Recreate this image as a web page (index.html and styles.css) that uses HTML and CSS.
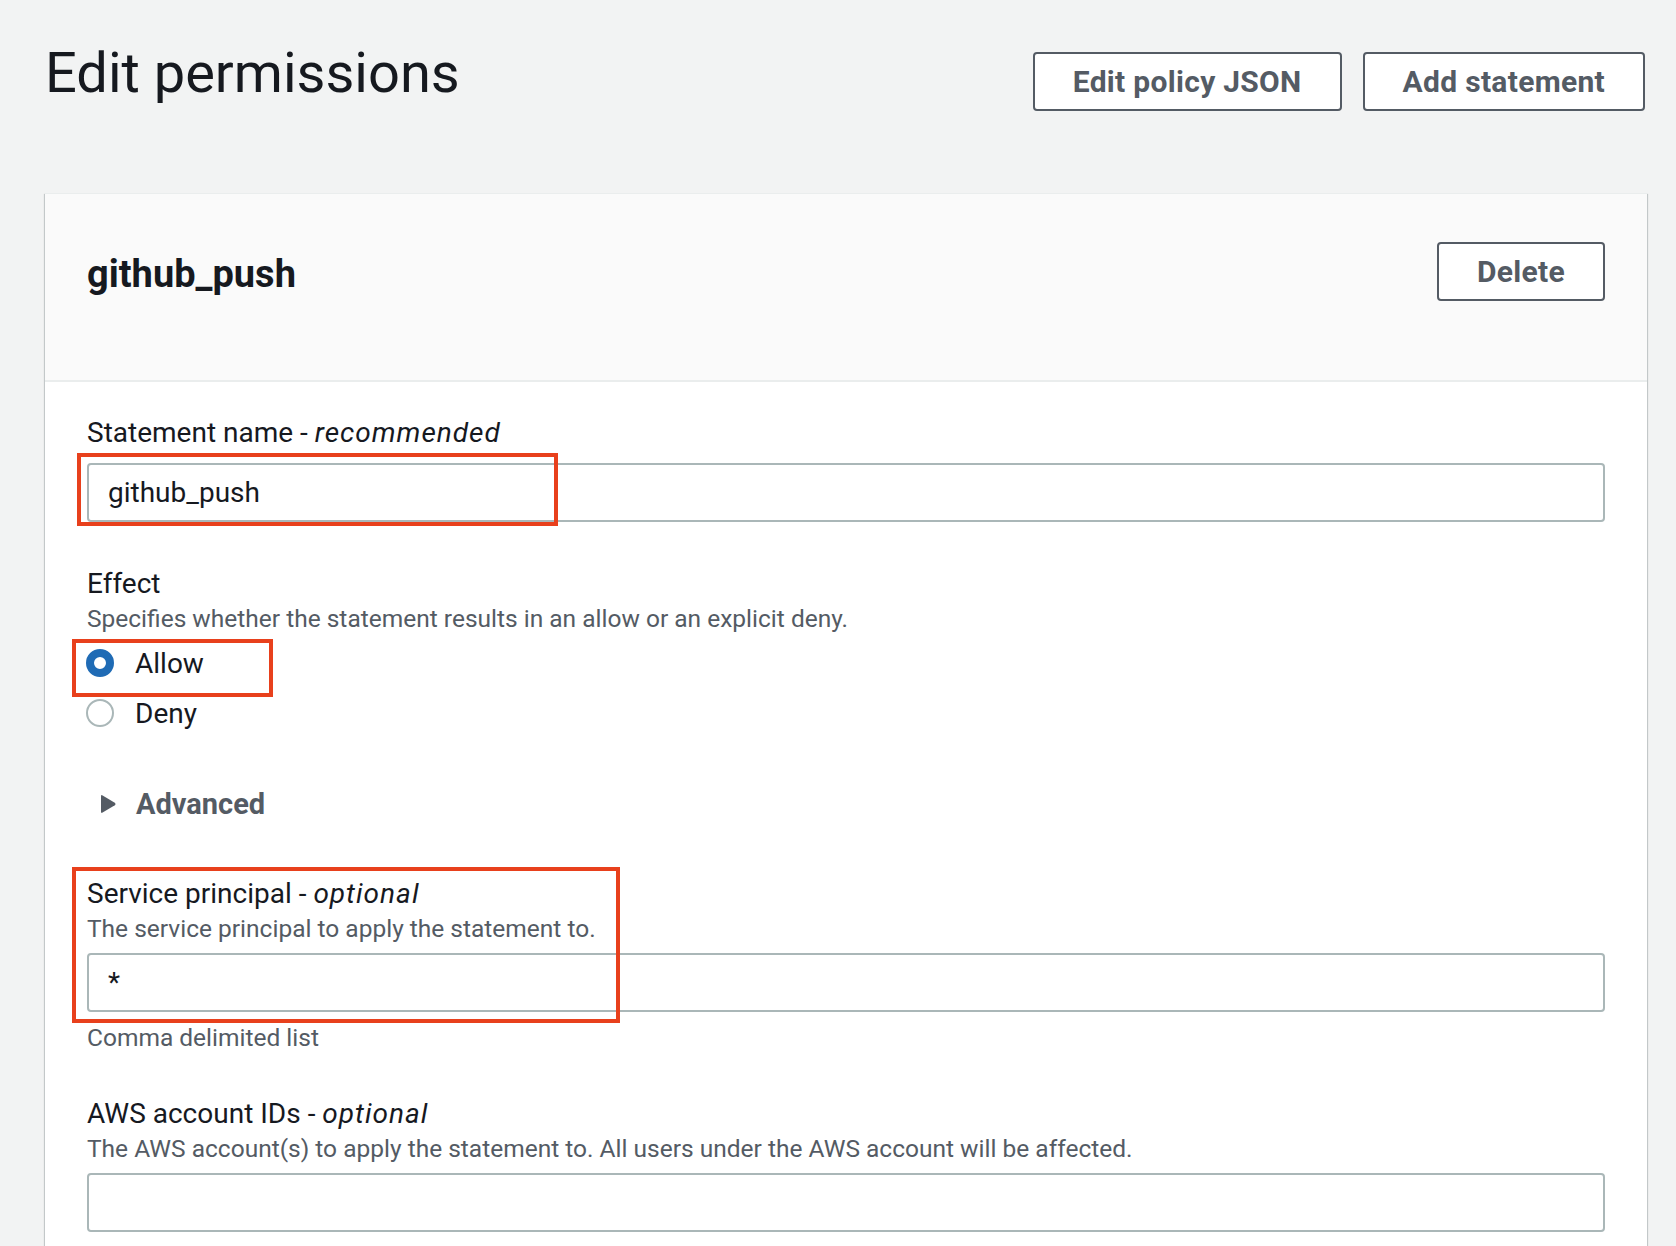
FILE: index.html
```html
<!DOCTYPE html>
<html lang="en">
<head>
<meta charset="utf-8">
<title>Edit permissions</title>
<link rel="stylesheet" href="styles.css">
</head>
<body>
<div class="page">
  <header class="page-header">
    <h1 class="page-title">Edit permissions</h1>
    <div class="actions">
      <button class="btn">Edit policy JSON</button>
      <button class="btn">Add statement</button>
    </div>
  </header>

  <section class="card">
    <div class="card-header">
      <h2 class="card-title">github_push</h2>
      <button class="btn">Delete</button>
    </div>

    <div class="card-body">
      <div class="field field-name">
        <div class="label">Statement name - <i>recommended</i></div>
        <div class="input">github_push</div>
        <span class="annot annot-name"></span>
      </div>

      <div class="field field-effect">
        <div class="label">Effect</div>
        <div class="desc">Specifies whether the statement results in an allow or an explicit deny.</div>
        <div class="radio-group">
          <div class="radio-row">
            <span class="radio radio-checked"></span>
            <span class="radio-label">Allow</span>
            <span class="annot annot-allow"></span>
          </div>
          <div class="radio-row">
            <span class="radio"></span>
            <span class="radio-label">Deny</span>
          </div>
        </div>
      </div>

      <div class="expander">
        <svg class="caret" width="16" height="20" viewBox="0 0 16 20"><path d="M1 2.2 Q1 0.5 2.6 1.4 L14.8 8.7 Q16.2 10 14.8 11.3 L2.6 18.6 Q1 19.5 1 17.8 Z" fill="#545b64"/></svg>
        <span class="expander-label">Advanced</span>
      </div>

      <div class="field field-service">
        <div class="label">Service principal - <i>optional</i></div>
        <div class="desc">The service principal to apply the statement to.</div>
        <div class="input">*</div>
        <span class="annot annot-service"></span>
      </div>
      <div class="constraint">Comma delimited list</div>

      <div class="field field-account">
        <div class="label">AWS account IDs - <i>optional</i></div>
        <div class="desc">The AWS account(s) to apply the statement to. All users under the AWS account will be affected.</div>
        <div class="input"></div>
      </div>
    </div>
  </section>
</div>
</body>
</html>
```

FILE: styles.css
```css
* {
  box-sizing: border-box;
}

html, body {
  margin: 0;
  padding: 0;
  background: #f2f3f3;
  font-family: "Roboto", "Liberation Sans", sans-serif;
  color: #16191f;
}

.page {
  padding: 41px 29px 0 45px;
  height: 1246px;
  overflow: hidden;
}

.page-header {
  display: flex;
  justify-content: space-between;
  align-items: flex-start;
  margin-bottom: 82px;
}

.page-title {
  margin: 0;
  font-size: 56px;
  line-height: 64px;
  font-weight: 400;
  color: #16191f;
}

.actions {
  display: flex;
  gap: 21px;
  margin-top: 11px;
  margin-right: 2px;
}

.btn {
  height: 59px;
  padding: 1px 38px 0 38px;
  border: 2px solid #545b64;
  border-radius: 4px;
  background: #ffffff;
  color: #545b64;
  font-family: "Roboto", "Liberation Sans", sans-serif;
  font-size: 30px;
  letter-spacing: 0.3px;
  font-weight: 700;
  line-height: 54px;
  white-space: nowrap;
}

.card {
  background: #ffffff;
  box-shadow: 0 1px 1px 0 rgba(0, 28, 36, 0.3), 1px 1px 1px 0 rgba(0, 28, 36, 0.15), -1px 1px 1px 0 rgba(0, 28, 36, 0.15);
  border-top: 1px solid #eaeded;
}

.card-header {
  display: flex;
  justify-content: space-between;
  align-items: center;
  padding: 48px 42px 79px 42px;
  background: #fafafa;
  border-bottom: 2px solid #eaeded;
}

.card-title {
  margin: 0;
  padding-top: 4px;
  font-size: 38px;
  line-height: 48px;
  font-weight: 700;
  color: #16191f;
}

.card-body {
  padding: 30px 42px 40px 42px;
}

.field {
  position: relative;
}

.label {
  padding-top: 1px;
  font-size: 28px;
  line-height: 40px;
  color: #16191f;
}

.label i {
  font-style: italic;
  letter-spacing: 1px;
}

.desc,
.constraint {
  font-size: 24.5px;
  line-height: 30px;
  padding-bottom: 2px;
  color: #545b64;
}

.input {
  height: 59px;
  border: 2px solid #aab7b8;
  border-radius: 4px;
  background: #ffffff;
  padding: 1px 19px 0 19px;
  font-size: 28px;
  line-height: 54px;
  color: #16191f;
}

.field-name .input {
  margin-top: 10px;
}

.field-effect {
  margin-top: 41px;
}

.radio-group {
  margin-top: 8px;
  display: flex;
  flex-direction: column;
  gap: 10px;
}

.radio-row {
  position: relative;
  display: flex;
  align-items: flex-start;
  height: 40px;
  gap: 21px;
}

.radio {
  width: 28px;
  height: 28px;
  margin-top: 5px;
  border-radius: 50%;
  border: 2px solid #aab7b8;
  background: #ffffff;
  flex: none;
  margin-left: -1px;
}

.radio-checked {
  border: 8px solid #1f6bb5;
}

.radio-label {
  font-size: 28px;
  line-height: 40px;
  color: #16191f;
}

.expander {
  margin-top: 50px;
  height: 40px;
  display: flex;
  align-items: center;
  gap: 20px;
  padding-left: 13px;
}

.caret {
  flex: none;
}

.expander-label {
  font-size: 29px;
  font-weight: 700;
  line-height: 40px;
  color: #545b64;
}

.field-service {
  margin-top: 49px;
}

.field-service .input,
.field-account .input {
  margin-top: 7px;
}

.constraint {
  margin-top: 11px;
}

.field-account {
  margin-top: 38px;
}

.annot {
  position: absolute;
  border: 4px solid #e8401c;
  pointer-events: none;
}

.annot-name {
  top: 41px;
  left: -10px;
  width: 481px;
  height: 73px;
}

.annot-allow {
  top: -5px;
  left: -15px;
  width: 201px;
  height: 58px;
}

.annot-service {
  top: -6px;
  left: -15px;
  width: 548px;
  height: 156px;
}
```
